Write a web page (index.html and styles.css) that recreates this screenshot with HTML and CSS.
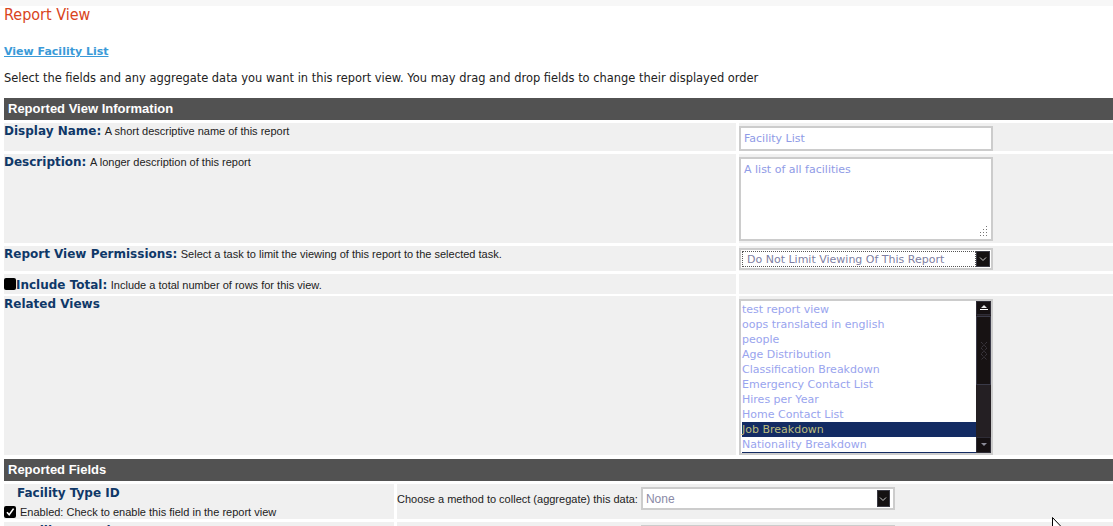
FILE: index.html
```html
<!DOCTYPE html>
<html lang="en">
<head>
    <meta charset="UTF-8">
    <meta name="viewport" content="width=device-width, initial-scale=1.0">
    <title>Report View</title>
    <link rel="stylesheet" href="styles.css">
</head>
<body>
    <div class="topbar"></div>
    <div class="page">
        <h1 class="title">Report View</h1>
        <div class="nav"><a class="back-link" href="#">View Facility List</a></div>
        <p class="intro">Select the fields and any aggregate data you want in this report view. You may drag and drop fields to change their displayed order</p>

        <div class="section">
            <div class="section-head">Reported View Information</div>

            <div class="info-row">
                <div class="info-label"><span class="label">Display Name:</span> <span class="hint">A short descriptive name of this report</span></div>
                <div class="info-field"><input class="text-input" type="text" value="Facility List"></div>
            </div>

            <div class="info-row">
                <div class="info-label"><span class="label">Description:</span> <span class="hint">A longer description of this report</span></div>
                <div class="info-field">
                    <div class="area-wrap">
                        <textarea class="text-area">A list of all facilities</textarea>
                        <svg class="area-grip" width="10" height="10" viewBox="0 0 10 10">
                            <rect x="8" y="0" width="1" height="1" fill="#777"/>
                            <rect x="8" y="3" width="1" height="1" fill="#777"/>
                            <rect x="5" y="3" width="1" height="1" fill="#777"/>
                            <rect x="8" y="6" width="1" height="1" fill="#777"/>
                            <rect x="5" y="6" width="1" height="1" fill="#777"/>
                            <rect x="2" y="6" width="1" height="1" fill="#777"/>
                            <rect x="8" y="9" width="1" height="1" fill="#777"/>
                            <rect x="5" y="9" width="1" height="1" fill="#777"/>
                            <rect x="2" y="9" width="1" height="1" fill="#777"/>
                        </svg>
                    </div>
                </div>
            </div>

            <div class="info-row">
                <div class="info-label"><span class="label">Report View Permissions:</span> <span class="hint">Select a task to limit the viewing of this report to the selected task.</span></div>
                <div class="info-field info-field-select">
                    <div class="select focused">
                        <span class="select-value">Do Not Limit Viewing Of This Report</span>
                        <span class="select-btn">
                            <svg width="8" height="6" viewBox="0 0 8 6"><path d="M1 1.5 L4 4.5 L7 1.5" fill="none" stroke="#cfcfcf" stroke-width="1"/></svg>
                        </span>
                    </div>
                </div>
            </div>

            <div class="info-row check-row">
                <div class="info-label"><span class="checkbox"></span><span class="label">Include Total:</span> <span class="hint">Include a total number of rows for this view.</span></div>
                <div class="info-field"></div>
            </div>

            <div class="info-row">
                <div class="info-label"><span class="label">Related Views</span></div>
                <div class="info-field">
                    <div class="listbox">
                        <div class="list-items">
                            <div class="list-item">test report view</div>
                            <div class="list-item">oops translated in english</div>
                            <div class="list-item">people</div>
                            <div class="list-item">Age Distribution</div>
                            <div class="list-item">Classification Breakdown</div>
                            <div class="list-item">Emergency Contact List</div>
                            <div class="list-item">Hires per Year</div>
                            <div class="list-item">Home Contact List</div>
                            <div class="list-item selected">Job Breakdown</div>
                            <div class="list-item">Nationality Breakdown</div>
                            <div class="list-item selected">Position Breakdown</div>
                        </div>
                        <div class="scrollbar">
                            <div class="scroll-btn">
                                <svg width="10" height="8" viewBox="0 0 10 8"><path d="M2 4 L5 1 L8 4 Z" fill="#e8e8e8"/><rect x="1" y="5" width="8" height="1" fill="#ffffff"/></svg>
                            </div>
                            <div class="scroll-thumb">
                                <svg width="6" height="18" viewBox="0 0 6 18"><path d="M0 0 L6 6 M6 0 L0 6 M0 6 L6 12 M6 6 L0 12 M0 12 L6 18 M6 12 L0 18" stroke="#4a4650" stroke-width="1" stroke-dasharray="1 1"/></svg>
                            </div>
                            <div class="scroll-track"></div>
                            <div class="scroll-btn scroll-btn-down">
                                <svg width="10" height="6" viewBox="0 0 10 6"><path d="M2 1 L8 1 L5 4 Z" fill="#8a8a96"/></svg>
                            </div>
                        </div>
                    </div>
                </div>
            </div>
        </div>

        <div class="section">
            <div class="section-head">Reported Fields</div>

            <div class="field-row">
                <div class="field-name-cell">
                    <div class="field-name">Facility Type ID</div>
                    <div class="field-enable">
                        <span class="checkbox checked">
                            <svg width="12" height="12" viewBox="0 0 12 12"><path d="M3 6.2 L5.2 8.8 L9.6 2.6" fill="none" stroke="#fff" stroke-width="1.6"/></svg>
                        </span>
                        <span>Enabled: Check to enable this field in the report view</span>
                    </div>
                </div>
                <div class="field-agg">
                    <div class="agg-line">
                        <span>Choose a method to collect (aggregate) this data:</span>
                        <div class="select plain">
                            <span class="select-value">None</span>
                            <span class="select-btn">
                                <svg width="8" height="6" viewBox="0 0 8 6"><path d="M1 1.5 L4 4.5 L7 1.5" fill="none" stroke="#cfcfcf" stroke-width="1"/></svg>
                            </span>
                        </div>
                    </div>
                </div>
            </div>

            <div class="field-row">
                <div class="field-name-cell">
                    <div class="field-name">Facility Location ID</div>
                    <div class="field-enable">
                        <span class="checkbox checked">
                            <svg width="12" height="12" viewBox="0 0 12 12"><path d="M3 6.2 L5.2 8.8 L9.6 2.6" fill="none" stroke="#fff" stroke-width="1.6"/></svg>
                        </span>
                        <span>Enabled: Check to enable this field in the report view</span>
                    </div>
                </div>
                <div class="field-agg">
                    <div class="agg-line">
                        <span>Choose a method to collect (aggregate) this data:</span>
                        <div class="select plain">
                            <span class="select-value">None</span>
                            <span class="select-btn"></span>
                        </div>
                    </div>
                </div>
            </div>
        </div>
    </div>

    <svg class="cursor" width="12" height="19" viewBox="0 0 12 19"><path d="M0.5 0.5 L0.5 16 L4 12.5 L6.8 18.2 L8.8 17.3 L6.1 11.6 L11 11.6 Z" fill="#fff" stroke="#000" stroke-width="1"/></svg>
</body>
</html>
```

FILE: styles.css
```css
body {
    margin: 0;
    font-family: "DejaVu Sans", Verdana, sans-serif;
    font-size: 11px;
    color: #222;
    background-color: #fff;
}

.topbar {
    height: 6px;
    background-color: #f7f7f7;
}

.page {
    padding-left: 4px;
}

.title {
    margin: 0;
    font-family: "DejaVu Sans Condensed", "DejaVu Sans", sans-serif;
    font-weight: normal;
    font-size: 16px;
    line-height: 18px;
    color: #d9441c;
}

.nav {
    margin-top: 21px;
    line-height: 14px;
}

.back-link {
    font-weight: bold;
    font-size: 11px;
    color: #3a9ad8;
}

.intro {
    margin: 12px 0 13px;
    font-size: 11.45px;
    line-height: 14px;
}

/* sections */

.section {
    display: flex;
    flex-direction: column;
    gap: 3px;
    margin-bottom: 4px;
}

.section-head {
    height: 22px;
    line-height: 22px;
    padding-left: 4px;
    background-color: #525252;
    color: #fff;
    font-family: "Liberation Sans", Arial, sans-serif;
    font-weight: bold;
    font-size: 13px;
}

.info-row {
    display: grid;
    grid-template-columns: 732px 1fr;
    column-gap: 3px;
}

.info-label,
.info-field,
.field-name-cell,
.field-agg {
    background-color: #f0f0f0;
}

.info-label {
    line-height: 16px;
}

.info-field {
    padding-top: 3px;
}

.info-field-select {
    padding: 2px 0 1px;
}

.check-row {
    height: 19px;
}

.check-row .info-label {
    padding-top: 3px;
    box-sizing: border-box;
}

.check-row .checkbox {
    vertical-align: -1px;
}

.label {
    font-weight: bold;
    font-size: 12px;
    color: #0f3868;
}

.hint {
    font-family: "Liberation Sans", Arial, sans-serif;
    font-size: 11px;
    color: #222;
}

/* controls */

.text-input {
    display: block;
    box-sizing: border-box;
    width: 254px;
    height: 25px;
    margin: 0;
    padding: 0 3px;
    border: 2px solid #ccc;
    font-family: "DejaVu Sans", Verdana, sans-serif;
    font-size: 11px;
    color: #8f9be6;
    outline: none;
}

.area-wrap {
    position: relative;
    width: 254px;
    margin-bottom: 2px;
}

.text-area {
    display: block;
    box-sizing: border-box;
    width: 254px;
    height: 84px;
    margin: 0;
    padding: 4px 3px;
    border: 2px solid #ccc;
    font-family: "DejaVu Sans", Verdana, sans-serif;
    font-size: 11px;
    line-height: 14px;
    color: #8f9be6;
    outline: none;
    resize: none;
}

.area-grip {
    position: absolute;
    right: 5px;
    bottom: 5px;
}

.select {
    box-sizing: border-box;
    display: flex;
    align-items: center;
    width: 254px;
    height: 22px;
    padding: 1px;
    border: 2px solid #ccc;
    background-color: #fff;
}

.select-value {
    flex: 1;
    align-self: stretch;
    display: flex;
    align-items: center;
    padding-left: 4px;
    color: #7f7fa3;
    white-space: nowrap;
}

.select.focused .select-value {
    border: 1px dotted #555;
}

.select-btn {
    display: flex;
    align-items: center;
    justify-content: center;
    width: 14px;
    height: 16px;
    background-color: #141112;
    border: 1px solid #3a3a44;
    box-sizing: border-box;
}

.select.plain {
    height: 23px;
}

.select.plain .select-value {
    padding-left: 2px;
    font-family: "Liberation Sans", Arial, sans-serif;
    font-size: 12px;
    color: #8a8aa6;
}

.select.plain .select-btn {
    width: 13px;
    height: 17px;
    margin-right: 2px;
}

.checkbox {
    display: inline-block;
    flex: none;
    width: 12px;
    height: 12px;
    border-radius: 2px;
    background-color: #000;
}

.checkbox svg {
    display: block;
}

/* related views list */

.listbox {
    box-sizing: border-box;
    display: flex;
    width: 254px;
    height: 156px;
    border: 2px solid #ccc;
    background-color: #fff;
}

.list-items {
    flex: 1;
    overflow: hidden;
    padding: 1px 0 0 1px;
}

.list-item {
    height: 15px;
    line-height: 15px;
    color: #99a4ee;
    white-space: nowrap;
}

.list-item.selected {
    background-color: #132b63;
    color: #bcbc7c;
}

.scrollbar {
    display: flex;
    flex-direction: column;
    width: 15px;
    background-color: #241f23;
}

.scroll-btn {
    display: flex;
    align-items: center;
    justify-content: center;
    height: 14px;
    background-color: #151012;
    border: 1px solid #2e2c36;
    box-sizing: border-box;
}

.scroll-btn-down {
    height: 16px;
}

.scroll-thumb {
    display: flex;
    align-items: center;
    justify-content: center;
    height: 69px;
    margin-top: 1px;
    background-color: #171213;
    border: 1px solid #3a3a48;
    box-sizing: border-box;
}

.scroll-track {
    flex: 1;
}

/* reported fields */

.field-row {
    display: grid;
    grid-template-columns: 390px 1fr;
    column-gap: 3px;
}

.field-name-cell {
    padding-top: 1px;
}

.field-name {
    padding-left: 13px;
    line-height: 16px;
    font-weight: bold;
    font-size: 12px;
    color: #0f3868;
}

.field-enable {
    display: flex;
    align-items: center;
    gap: 4px;
    height: 15px;
    margin-top: 3px;
    font-family: "Liberation Sans", Arial, sans-serif;
    font-size: 11px;
}

.field-agg {
    padding-top: 3px;
    font-family: "Liberation Sans", Arial, sans-serif;
    font-size: 11px;
}

.agg-line {
    display: flex;
    align-items: center;
    gap: 3px;
}

.cursor {
    position: absolute;
    left: 1052px;
    top: 517px;
}
```
